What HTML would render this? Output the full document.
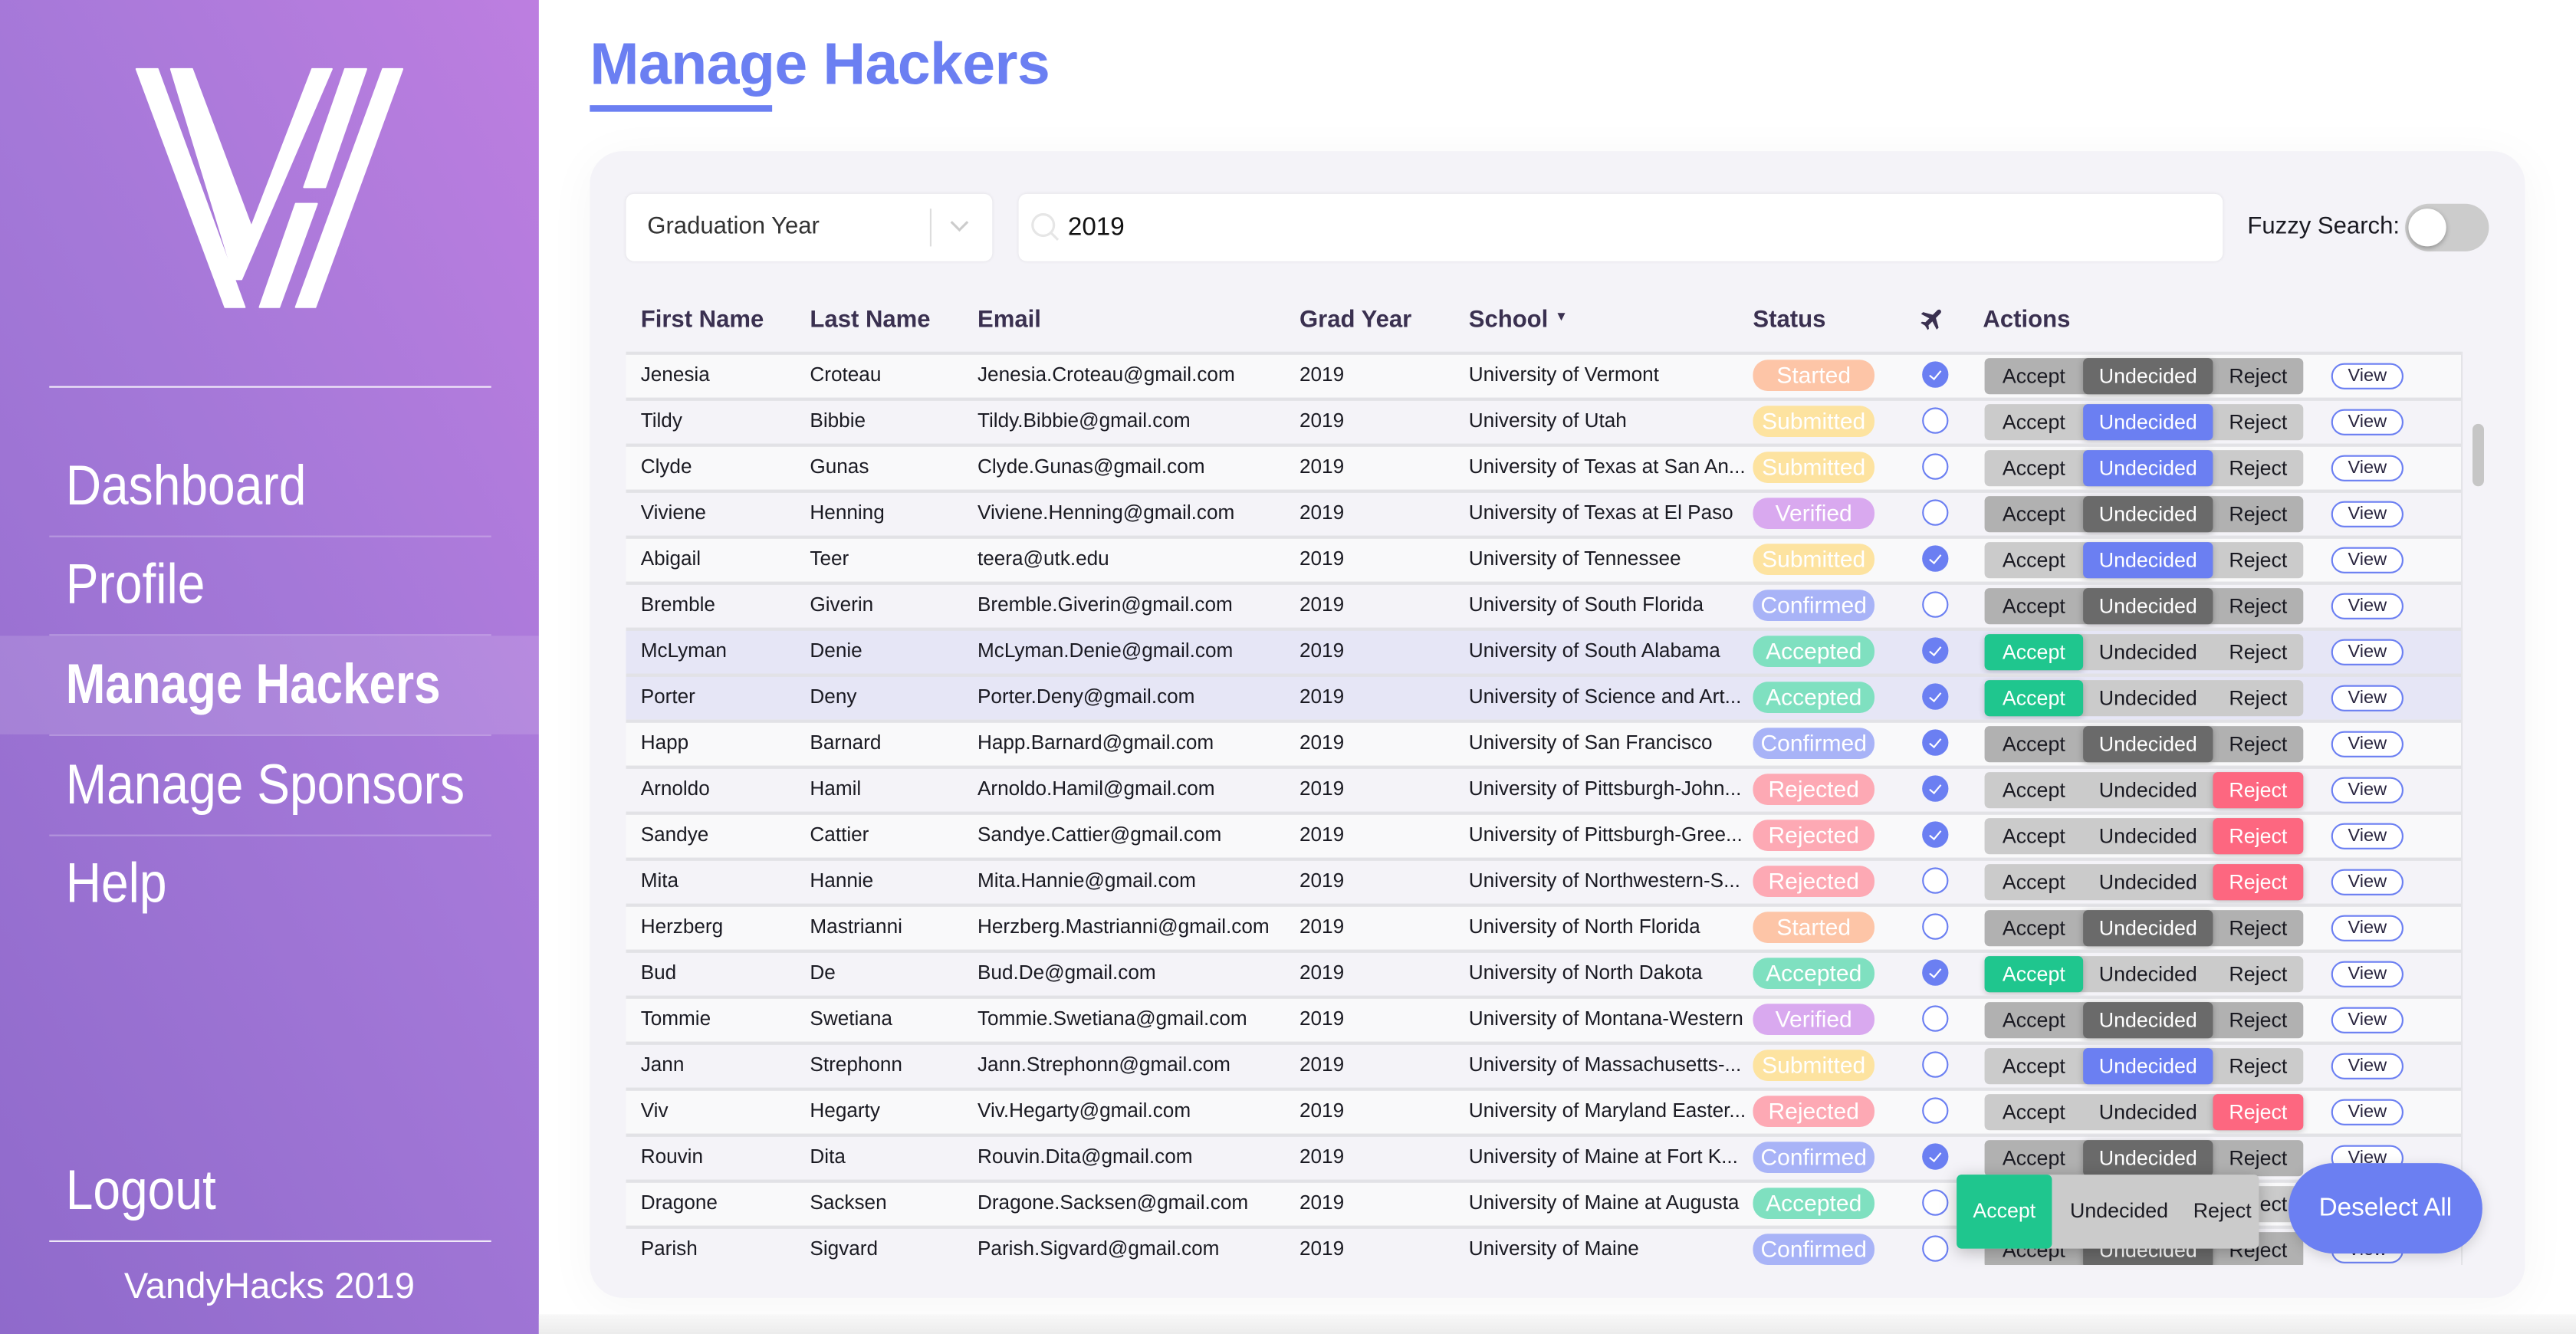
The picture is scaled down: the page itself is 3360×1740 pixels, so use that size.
<!DOCTYPE html>
<html><head><meta charset="utf-8">
<style>
*{box-sizing:border-box;margin:0;padding:0}
html,body{width:3360px;height:1740px;overflow:hidden;background:#fff}
#s{position:absolute;left:0;top:0;width:1568px;height:812px;transform:scale(2.142857);transform-origin:0 0;font-family:"Liberation Sans",Arial,sans-serif;color:#1a1a22}
.side{position:absolute;left:0;top:0;width:328px;height:812px;background:linear-gradient(60deg,#8f6acb 0%,#a478d8 55%,#bd7ee0 100%)}
.nav{position:absolute;left:40px;color:#fff;font-size:34px;font-weight:300;line-height:40px;transform:scaleX(.88);transform-origin:0 0;white-space:nowrap}
.hl{position:absolute;left:30px;width:269px;height:1px;background:rgba(255,255,255,.25)}
.title{position:absolute;left:359px;top:18px;font-size:36px;font-weight:bold;color:#6b7ff2;letter-spacing:-.3px}
.card{position:absolute;left:359px;top:92px;width:1178px;height:698px;background:#f4f3f8;border-radius:20px;box-shadow:0 4px 30px rgba(0,0,0,.04)}
.box{position:absolute;background:#fff;border-radius:5px;box-shadow:0 0 2px rgba(0,0,0,.08)}
.th{position:absolute;top:187px;font-size:14.5px;font-weight:bold;color:#3a3050}
.tbl{position:absolute;left:381px;top:214px;width:1134px;height:556px;overflow:hidden}
.row{position:absolute;left:0;width:1117px;height:28px;border-top:2px solid #e2e2e6;font-size:12.2px;line-height:25px}
.row>span{position:absolute;top:0;white-space:nowrap}
.c1{left:9px}.c2{left:112px}.c3{left:214px}.c4{left:410px}.c5{left:513px}
.st{left:686px;top:3px!important;width:74px;height:19px;border-radius:9px;color:#fff;text-align:center;line-height:19px;font-size:14px}
.ck{left:789px;top:4px!important;width:16px;height:16px;border-radius:50%;border:1.5px solid #6b7ff2;background:#fff}
.ck.on{background:#6b7ff2}
.ck.on:after{content:"";position:absolute;left:4.5px;top:2.5px;width:3px;height:6px;border:solid #fff;border-width:0 1.5px 1.5px 0;transform:rotate(40deg)}
.g{left:827px;top:2px!important;width:194px;height:22px;border-radius:3px;background:#cbcbcb;line-height:22px;font-size:12.5px}
.g i{font-style:normal;position:absolute;top:0;height:22px;text-align:center;border-radius:3px}
.g .a{left:0;width:60px}.g .u{left:60px;width:79px}.g .r{left:139px;width:55px}
.g.d{background:#b1b1b1}.g.d .u{background:#6a6a6a;color:#fff;box-shadow:0 1px 4px rgba(0,0,0,.25)}
.g.s .u{background:#6b7ff2;color:#fff;box-shadow:0 1px 4px rgba(0,0,0,.2)}
.g.ac .a{background:#1fc68e;color:#fff;box-shadow:0 1px 4px rgba(0,0,0,.2)}
.g.rj .r{background:#fd6780;color:#fff;box-shadow:0 1px 4px rgba(0,0,0,.2)}
.vw{left:1038px;top:5px!important;width:44px;height:16px;border:1.5px solid #6b7ff2;border-radius:8px;background:#fff;text-align:center;line-height:14px;font-size:11px;color:#2a2640}
.o{background:#f9f9fa}.e{background:#f4f3f8}.h{background:#e6e6f6}
</style></head><body><div id="s">
<div class="side">
<svg style="position:absolute;left:0;top:0" width="328" height="200" viewBox="0 0 328 200">
<g fill="#fff" stroke="#fff" stroke-width="1" stroke-linejoin="round">
<polygon points="83,42 96,42 149,187 137,187"/>
<polygon points="104,42 117,42 153,138 190,42 202,42 147,170 143,170"/>
<polygon points="210,42 223,42 198,114 185,114"/>
<polygon points="180,124 193,124 170,187 158,187"/>
<polygon points="233,42 245,42 192,187 180,187"/>
</g></svg>
<div class="hl" style="top:235px;background:rgba(255,255,255,.85)"></div>
<div class="nav" style="top:276px">Dashboard</div>
<div class="hl" style="top:326px"></div>
<div class="nav" style="top:336px">Profile</div>
<div class="hl" style="top:386px"></div>
<div style="position:absolute;left:0;top:387px;width:328px;height:60px;background:rgba(255,255,255,.12)"></div>
<div class="nav" style="top:397px;font-weight:bold;transform:scaleX(.85)">Manage Hackers</div>
<div class="hl" style="top:447px"></div>
<div class="nav" style="top:458px">Manage Sponsors</div>
<div class="hl" style="top:508px"></div>
<div class="nav" style="top:518px">Help</div>
<div class="nav" style="top:705px">Logout</div>
<div class="hl" style="top:755px;background:rgba(255,255,255,.85)"></div>
<div style="position:absolute;left:0;width:328px;top:770px;text-align:center;color:#fff;font-size:22px">VandyHacks 2019</div>
</div>
<div class="title">Manage Hackers</div>
<div style="position:absolute;left:359px;top:64px;width:111px;height:4px;background:#6b7ff2"></div>
<div class="card"></div>
<div class="box" style="left:381px;top:118px;width:223px;height:41px"><span style="position:absolute;left:13px;top:12px;font-size:14.5px;color:#333">Graduation Year</span><span style="position:absolute;left:185px;top:9px;width:1px;height:23px;background:#ddd"></span><svg style="position:absolute;left:197px;top:15px" width="12" height="10"><polyline points="1,2 6,7 11,2" fill="none" stroke="#ccc" stroke-width="1.5"/></svg></div>
<div class="box" style="left:620px;top:118px;width:733px;height:41px"><svg style="position:absolute;left:7px;top:11px" width="20" height="20"><circle cx="8" cy="8" r="6.5" fill="none" stroke="#e6e6e6" stroke-width="1.5"/><line x1="13" y1="13" x2="17" y2="17" stroke="#e6e6e6" stroke-width="1.5"/></svg><span style="position:absolute;left:30px;top:12px;font-size:15.5px;color:#111">2019</span></div>
<div style="position:absolute;left:1368px;top:130px;font-size:14.5px;color:#1a1a22">Fuzzy Search:</div>
<div style="position:absolute;left:1464px;top:124px;width:51px;height:29px;border-radius:15px;background:#ccc"><div style="position:absolute;left:2px;top:3px;width:23px;height:23px;border-radius:50%;background:#fff;box-shadow:0 1px 3px rgba(0,0,0,.3)"></div></div>
<div class="th" style="left:390px">First Name</div>
<div class="th" style="left:493px">Last Name</div>
<div class="th" style="left:595px">Email</div>
<div class="th" style="left:791px">Grad Year</div>
<div class="th" style="left:894px">School <span style="font-size:8px;vertical-align:4px">&#9660;</span></div>
<div class="th" style="left:1067px">Status</div>
<svg style="position:absolute;left:1168px;top:186px" width="16" height="16" viewBox="0 0 24 24"><path fill="#3a3050" transform="rotate(45 12 12)" d="M12 1c1.2 0 2 1 2 2.2V9l8 4.5V16l-8-2.5v5l2.5 2V22L12 21l-4.5 1v-1.5l2.5-2v-5L2 16v-2.5L10 9V3.2C10 2 10.8 1 12 1z"/></svg>
<div class="th" style="left:1207px">Actions</div>
<div class="tbl">
<div class="row o" style="top:0"><span class="c1">Jenesia</span><span class="c2">Croteau</span><span class="c3">Jenesia.Croteau@gmail.com</span><span class="c4">2019</span><span class="c5">University of Vermont</span><span class="st" style="background:#fdc5a7">Started</span><span class="ck on"></span><span class="g d"><i class="a">Accept</i><i class="u">Undecided</i><i class="r">Reject</i></span><span class="vw">View</span></div>
<div class="row e" style="top:28px"><span class="c1">Tildy</span><span class="c2">Bibbie</span><span class="c3">Tildy.Bibbie@gmail.com</span><span class="c4">2019</span><span class="c5">University of Utah</span><span class="st" style="background:#fde3a0">Submitted</span><span class="ck"></span><span class="g s"><i class="a">Accept</i><i class="u">Undecided</i><i class="r">Reject</i></span><span class="vw">View</span></div>
<div class="row o" style="top:56px"><span class="c1">Clyde</span><span class="c2">Gunas</span><span class="c3">Clyde.Gunas@gmail.com</span><span class="c4">2019</span><span class="c5">University of Texas at San An...</span><span class="st" style="background:#fde3a0">Submitted</span><span class="ck"></span><span class="g s"><i class="a">Accept</i><i class="u">Undecided</i><i class="r">Reject</i></span><span class="vw">View</span></div>
<div class="row e" style="top:84px"><span class="c1">Viviene</span><span class="c2">Henning</span><span class="c3">Viviene.Henning@gmail.com</span><span class="c4">2019</span><span class="c5">University of Texas at El Paso</span><span class="st" style="background:#d9a9ef">Verified</span><span class="ck"></span><span class="g d"><i class="a">Accept</i><i class="u">Undecided</i><i class="r">Reject</i></span><span class="vw">View</span></div>
<div class="row o" style="top:112px"><span class="c1">Abigail</span><span class="c2">Teer</span><span class="c3">teera@utk.edu</span><span class="c4">2019</span><span class="c5">University of Tennessee</span><span class="st" style="background:#fde3a0">Submitted</span><span class="ck on"></span><span class="g s"><i class="a">Accept</i><i class="u">Undecided</i><i class="r">Reject</i></span><span class="vw">View</span></div>
<div class="row e" style="top:140px"><span class="c1">Bremble</span><span class="c2">Giverin</span><span class="c3">Bremble.Giverin@gmail.com</span><span class="c4">2019</span><span class="c5">University of South Florida</span><span class="st" style="background:#a8b3f7">Confirmed</span><span class="ck"></span><span class="g d"><i class="a">Accept</i><i class="u">Undecided</i><i class="r">Reject</i></span><span class="vw">View</span></div>
<div class="row h" style="top:168px"><span class="c1">McLyman</span><span class="c2">Denie</span><span class="c3">McLyman.Denie@gmail.com</span><span class="c4">2019</span><span class="c5">University of South Alabama</span><span class="st" style="background:#7fe0c0">Accepted</span><span class="ck on"></span><span class="g ac"><i class="a">Accept</i><i class="u">Undecided</i><i class="r">Reject</i></span><span class="vw">View</span></div>
<div class="row h" style="top:196px"><span class="c1">Porter</span><span class="c2">Deny</span><span class="c3">Porter.Deny@gmail.com</span><span class="c4">2019</span><span class="c5">University of Science and Art...</span><span class="st" style="background:#7fe0c0">Accepted</span><span class="ck on"></span><span class="g ac"><i class="a">Accept</i><i class="u">Undecided</i><i class="r">Reject</i></span><span class="vw">View</span></div>
<div class="row o" style="top:224px"><span class="c1">Happ</span><span class="c2">Barnard</span><span class="c3">Happ.Barnard@gmail.com</span><span class="c4">2019</span><span class="c5">University of San Francisco</span><span class="st" style="background:#a8b3f7">Confirmed</span><span class="ck on"></span><span class="g d"><i class="a">Accept</i><i class="u">Undecided</i><i class="r">Reject</i></span><span class="vw">View</span></div>
<div class="row e" style="top:252px"><span class="c1">Arnoldo</span><span class="c2">Hamil</span><span class="c3">Arnoldo.Hamil@gmail.com</span><span class="c4">2019</span><span class="c5">University of Pittsburgh-John...</span><span class="st" style="background:#fda9b4">Rejected</span><span class="ck on"></span><span class="g rj"><i class="a">Accept</i><i class="u">Undecided</i><i class="r">Reject</i></span><span class="vw">View</span></div>
<div class="row o" style="top:280px"><span class="c1">Sandye</span><span class="c2">Cattier</span><span class="c3">Sandye.Cattier@gmail.com</span><span class="c4">2019</span><span class="c5">University of Pittsburgh-Gree...</span><span class="st" style="background:#fda9b4">Rejected</span><span class="ck on"></span><span class="g rj"><i class="a">Accept</i><i class="u">Undecided</i><i class="r">Reject</i></span><span class="vw">View</span></div>
<div class="row e" style="top:308px"><span class="c1">Mita</span><span class="c2">Hannie</span><span class="c3">Mita.Hannie@gmail.com</span><span class="c4">2019</span><span class="c5">University of Northwestern-S...</span><span class="st" style="background:#fda9b4">Rejected</span><span class="ck"></span><span class="g rj"><i class="a">Accept</i><i class="u">Undecided</i><i class="r">Reject</i></span><span class="vw">View</span></div>
<div class="row o" style="top:336px"><span class="c1">Herzberg</span><span class="c2">Mastrianni</span><span class="c3">Herzberg.Mastrianni@gmail.com</span><span class="c4">2019</span><span class="c5">University of North Florida</span><span class="st" style="background:#fdc5a7">Started</span><span class="ck"></span><span class="g d"><i class="a">Accept</i><i class="u">Undecided</i><i class="r">Reject</i></span><span class="vw">View</span></div>
<div class="row e" style="top:364px"><span class="c1">Bud</span><span class="c2">De</span><span class="c3">Bud.De@gmail.com</span><span class="c4">2019</span><span class="c5">University of North Dakota</span><span class="st" style="background:#7fe0c0">Accepted</span><span class="ck on"></span><span class="g ac"><i class="a">Accept</i><i class="u">Undecided</i><i class="r">Reject</i></span><span class="vw">View</span></div>
<div class="row o" style="top:392px"><span class="c1">Tommie</span><span class="c2">Swetiana</span><span class="c3">Tommie.Swetiana@gmail.com</span><span class="c4">2019</span><span class="c5">University of Montana-Western</span><span class="st" style="background:#d9a9ef">Verified</span><span class="ck"></span><span class="g d"><i class="a">Accept</i><i class="u">Undecided</i><i class="r">Reject</i></span><span class="vw">View</span></div>
<div class="row e" style="top:420px"><span class="c1">Jann</span><span class="c2">Strephonn</span><span class="c3">Jann.Strephonn@gmail.com</span><span class="c4">2019</span><span class="c5">University of Massachusetts-...</span><span class="st" style="background:#fde3a0">Submitted</span><span class="ck"></span><span class="g s"><i class="a">Accept</i><i class="u">Undecided</i><i class="r">Reject</i></span><span class="vw">View</span></div>
<div class="row o" style="top:448px"><span class="c1">Viv</span><span class="c2">Hegarty</span><span class="c3">Viv.Hegarty@gmail.com</span><span class="c4">2019</span><span class="c5">University of Maryland Easter...</span><span class="st" style="background:#fda9b4">Rejected</span><span class="ck"></span><span class="g rj"><i class="a">Accept</i><i class="u">Undecided</i><i class="r">Reject</i></span><span class="vw">View</span></div>
<div class="row e" style="top:476px"><span class="c1">Rouvin</span><span class="c2">Dita</span><span class="c3">Rouvin.Dita@gmail.com</span><span class="c4">2019</span><span class="c5">University of Maine at Fort K...</span><span class="st" style="background:#a8b3f7">Confirmed</span><span class="ck on"></span><span class="g d"><i class="a">Accept</i><i class="u">Undecided</i><i class="r">Reject</i></span><span class="vw">View</span></div>
<div class="row o" style="top:504px"><span class="c1">Dragone</span><span class="c2">Sacksen</span><span class="c3">Dragone.Sacksen@gmail.com</span><span class="c4">2019</span><span class="c5">University of Maine at Augusta</span><span class="st" style="background:#7fe0c0">Accepted</span><span class="ck"></span><span class="g ac"><i class="a">Accept</i><i class="u">Undecided</i><i class="r">Reject</i></span><span class="vw">View</span></div>
<div class="row e" style="top:532px"><span class="c1">Parish</span><span class="c2">Sigvard</span><span class="c3">Parish.Sigvard@gmail.com</span><span class="c4">2019</span><span class="c5">University of Maine</span><span class="st" style="background:#a8b3f7">Confirmed</span><span class="ck"></span><span class="g d"><i class="a">Accept</i><i class="u">Undecided</i><i class="r">Reject</i></span><span class="vw">View</span></div>
<div style="position:absolute;left:1117px;top:0;width:1px;height:556px;background:#e4e4e8"></div>
<div style="position:absolute;left:1124px;top:44px;width:7px;height:38px;border-radius:4px;background:#c6c6c6"></div>
</div>
<div style="position:absolute;left:1191px;top:715px;width:184px;height:45px;background:#cbcbcb;border-radius:3px;box-shadow:0 2px 10px rgba(0,0,0,.25);font-size:12.5px;line-height:45px">
<div style="position:absolute;left:0;top:0;width:58px;height:45px;background:#1fc68e;color:#fff;text-align:center;border-radius:3px">Accept</div>
<div style="position:absolute;left:69px;top:0">Undecided</div>
<div style="position:absolute;left:144px;top:0">Reject</div>
</div>
<div style="position:absolute;left:1393px;top:708px;width:118px;height:55px;border-radius:28px;background:#6b7ff2;color:#fff;font-size:15.5px;text-align:center;line-height:55px;box-shadow:0 2px 8px rgba(0,0,0,.15)">Deselect All</div>
<div style="position:absolute;left:328px;top:800px;width:1240px;height:12px;background:linear-gradient(#f8f8f8,#ececec)"></div>
</div></body></html>
